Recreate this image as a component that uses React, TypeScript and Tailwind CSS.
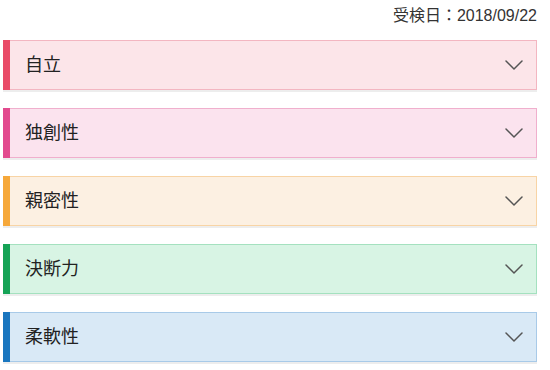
import React from 'react';

const items = [
  { label: '自立', box: 'bg-[#fce5e9] border-[#f3b6c1]', bar: 'bg-[#e94b68]' },
  { label: '独創性', box: 'bg-[#fbe3ee] border-[#f0afcd]', bar: 'bg-[#e24a8e]' },
  { label: '親密性', box: 'bg-[#fcf0e2] border-[#f8d4a5]', bar: 'bg-[#f6a83a]' },
  { label: '決断力', box: 'bg-[#d8f4e4] border-[#a4e1bf]', bar: 'bg-[#16a356]' },
  { label: '柔軟性', box: 'bg-[#d9e9f6] border-[#a8cae8]', bar: 'bg-[#1a76bf]' },
];

const Chevron = () => (
  <svg width="18" height="10" viewBox="0 0 18 10" fill="none">
    <path d="M1 1l8 8 8-8" stroke="#555" strokeWidth="1.5" strokeLinecap="round" strokeLinejoin="round" />
  </svg>
);

export default function App() {
  return (
    <div
      className="w-[550px] h-[370px] bg-white pl-[3px] pr-[13px]"
      style={{ fontFamily: '"Helvetica Neue", "Liberation Sans", "Noto Sans CJK JP", sans-serif' }}
    >
      <div className="h-[40px] pt-[6px] text-right text-[16px] leading-[20px] text-[#333]">受検日：2018/09/22</div>
      <div className="flex flex-col gap-[18px]">
        {items.map((it) => (
          <div
            key={it.label}
            className={`relative flex h-[50px] items-center border ${it.box} shadow-[0_2px_0_rgba(0,0,0,0.07)]`}
          >
            <div className={`absolute -left-px -top-px -bottom-px w-[7px] ${it.bar}`} />
            <span className="pl-[21px] text-[18px] text-[#222]">{it.label}</span>
            <span className="ml-auto mr-[13px] flex">
              <Chevron />
            </span>
          </div>
        ))}
      </div>
    </div>
  );
}
